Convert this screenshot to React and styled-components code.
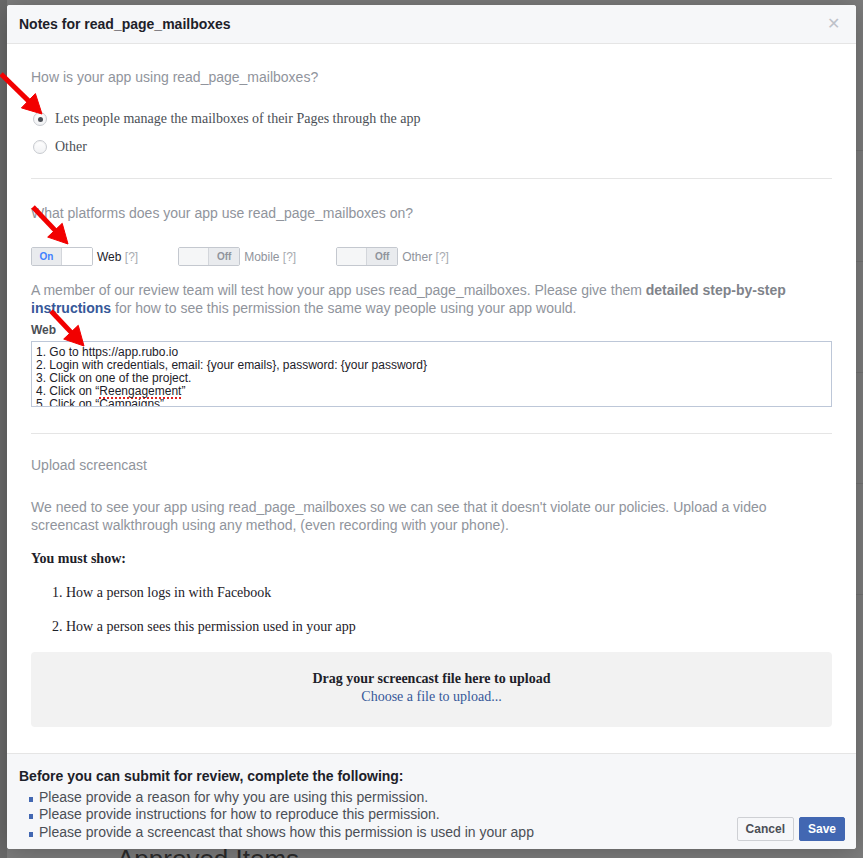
import React from "react";
import styled, { createGlobalStyle } from "styled-components";

const GlobalStyle = createGlobalStyle`
  html, body {
    margin: 0;
    padding: 0;
    background: #7b7b7b;
  }
  body {
    font-family: "Liberation Sans", Arial, sans-serif;
    -webkit-font-smoothing: antialiased;
  }
`;

const Screen = styled.div`
  position: relative;
  width: 863px;
  height: 858px;
  overflow: hidden;
  background: #7d7d7d;
`;

// page that sits behind the dimmed overlay
const BehindPage = styled.div`
  display: grid;
  grid-template-columns: 7px 1fr;
  height: 100%;

  .side {
    background: #6a6a6a;
  }
  .main {
    display: flex;
    flex-direction: column;
    padding-top: 40px;
  }
  .row {
    height: 110px;
    border-bottom: 1px solid #727272;
  }
  .heading {
    margin-top: auto;
    padding: 0 0 0 110px;
    height: 14px;
    overflow: hidden;
    font-size: 26px;
    line-height: 30px;
    color: #2b2b2b;
  }
`;

const Overlay = styled.div`
  position: absolute;
  inset: 0;
  display: flex;
  align-items: flex-start;
  padding: 5px 7px 0 7px;
`;

const Dialog = styled.div`
  width: 849px;
  height: 844px;
  background: #fff;
  border-radius: 3px;
  box-shadow: 0 2px 26px rgba(0, 0, 0, 0.25);
  display: flex;
  flex-direction: column;
  overflow: hidden;
`;

const Header = styled.div`
  display: flex;
  align-items: center;
  justify-content: space-between;
  height: 38px;
  padding: 0 12px;
  background: #f6f7f9;
  border-bottom: 1px solid #e5e5e5;

  h2 {
    margin: 0;
    font-size: 14px;
    font-weight: bold;
    color: #1d2129;
  }
  .close {
    color: #bec2c9;
    font-size: 16px;
    line-height: 16px;
    margin-right: 4px;
  }
`;

const Body = styled.div`
  flex: 1;
  padding: 0 24px;
`;

const Section = styled.div`
  padding: ${(p) => p.$pad};
  border-bottom: ${(p) => (p.$last ? "none" : "1px solid #e5e5e5")};
`;

const Question = styled.div`
  font-size: 14px;
  line-height: 18px;
  color: #90949c;
  margin-top: ${(p) => p.$mt || 0}px;
`;

const RadioList = styled.div`
  margin-top: 19px;
  display: flex;
  flex-direction: column;
`;

const RadioRow = styled.label`
  display: flex;
  align-items: center;
  height: 28px;
  gap: 8px;
  padding-left: 2px;
  font-family: "Liberation Serif", "Times New Roman", serif;
  font-size: 14px;
  color: #4b4f56;
`;

const RadioDot = styled.span`
  position: relative;
  width: 12px;
  height: 12px;
  border-radius: 50%;
  border: 1px solid #c8cbd0;
  background: linear-gradient(#ffffff, #f1f2f4);
  box-shadow: inset 0 1px 1px rgba(0, 0, 0, 0.06);

  &::after {
    content: "";
    display: ${(p) => (p.$checked ? "block" : "none")};
    position: absolute;
    left: 3.5px;
    top: 3.5px;
    width: 5px;
    height: 5px;
    border-radius: 50%;
    background: #4b4f56;
  }
`;

const ToggleRow = styled.div`
  display: flex;
  align-items: center;
  gap: 40px;
  margin-top: 25px;
  height: 19px;
`;

const ToggleGroup = styled.div`
  display: flex;
  align-items: center;
  gap: 4px;
`;

const Toggle = styled.div`
  display: grid;
  grid-template-columns: 30px 30px;
  width: 62px;
  height: 19px;
  box-sizing: border-box;
  border: 1px solid #c4c8cf;
  border-radius: 2px;
  overflow: hidden;

  span {
    display: flex;
    align-items: center;
    justify-content: center;
    font-size: 10px;
    font-weight: bold;
  }
  .left {
    background: ${(p) => (p.$on ? "#e9ebee" : "#f5f6f7")};
    color: #4080ff;
    border-right: 1px solid #d3d6db;
  }
  .right {
    background: ${(p) => (p.$on ? "#fff" : "#e9ebee")};
    color: #90949c;
  }
`;

const ToggleLabel = styled.span`
  font-size: 12px;
  color: ${(p) => (p.$active ? "#1d2129" : "#90949c")};

  em {
    font-style: normal;
    color: #a8abb1;
  }
`;

const Paragraph = styled.p`
  margin: ${(p) => p.$mt || 0}px 0 0;
  font-size: 14px;
  line-height: 18px;
  color: #90949c;

  b {
    color: #7f838a;
  }
  a {
    color: #365899;
    font-weight: bold;
    text-decoration: none;
  }
`;

const FieldLabel = styled.div`
  margin-top: 6px;
  font-size: 12px;
  line-height: 14px;
  font-weight: bold;
  color: #4b4f56;
`;

const TextBox = styled.div`
  margin-top: 4px;
  height: 66px;
  box-sizing: border-box;
  border: 1px solid #bdc7d8;
  padding: 4px 4px 0;
  overflow: hidden;
  font-size: 12px;
  line-height: 13px;
  color: #1d2129;

  .typo {
    text-decoration: underline dotted #e02020;
    text-decoration-thickness: 2px;
    text-underline-offset: 2px;
  }
`;

const SerifBold = styled.div`
  margin-top: 16px;
  font-family: "Liberation Serif", "Times New Roman", serif;
  font-size: 14px;
  line-height: 18px;
  font-weight: bold;
  color: #1d2129;
`;

const ShowList = styled.ol`
  margin: 16px 0 0;
  padding: 0 0 0 35px;
  font-family: "Liberation Serif", "Times New Roman", serif;
  font-size: 14px;
  line-height: 18px;
  color: #1d2129;

  li + li {
    margin-top: 16px;
  }
`;

const DropZone = styled.div`
  margin-top: 16px;
  height: 75px;
  box-sizing: border-box;
  padding-top: 18px;
  background: #f2f2f2;
  border-radius: 4px;
  text-align: center;
  font-family: "Liberation Serif", "Times New Roman", serif;
  font-size: 14px;
  line-height: 18px;

  strong {
    display: block;
    color: #1d2129;
  }
  a {
    color: #365899;
    text-decoration: none;
  }
`;

const Footer = styled.div`
  display: flex;
  align-items: flex-end;
  justify-content: space-between;
  padding: 13px 11px 8px 12px;
  background: #f6f7f9;
  border-top: 1px solid #e5e5e5;

  h3 {
    margin: 0;
    font-size: 14px;
    line-height: 18px;
    font-weight: bold;
    color: #1d2129;
  }
  ul {
    margin: 4px 0 0;
    padding: 0 0 0 10px;
    list-style: none;
  }
  li {
    position: relative;
    padding-left: 10px;
    font-size: 14px;
    line-height: 17.5px;
    color: #4b4f56;
  }
  li::before {
    content: "";
    position: absolute;
    left: 0;
    top: 8px;
    width: 4px;
    height: 5px;
    background: #4267b2;
  }
`;

const Buttons = styled.div`
  display: flex;
  gap: 5px;
  margin-bottom: 0;
`;

const Button = styled.button`
  height: 24px;
  padding: 0 8px;
  border-radius: 2px;
  font-family: "Liberation Sans", Arial, sans-serif;
  font-size: 12px;
  font-weight: bold;
  border: 1px solid ${(p) => (p.$primary ? "#4267b2" : "#ced0d4")};
  background: ${(p) => (p.$primary ? "#4267b2" : "#f6f7f9")};
  color: ${(p) => (p.$primary ? "#fff" : "#4b4f56")};
`;

const Marks = styled.svg`
  position: absolute;
  left: 0;
  top: 0;
  pointer-events: none;
`;

function Arrow({ x1, y1, x2, y2 }) {
  const dx = x2 - x1;
  const dy = y2 - y1;
  const len = Math.hypot(dx, dy);
  const ux = dx / len;
  const uy = dy / len;
  const head = 19;
  const half = 10;
  const bx = x2 - ux * head;
  const by = y2 - uy * head;
  const pts = [
    [x2, y2],
    [bx - uy * half, by + ux * half],
    [bx + uy * half, by - ux * half],
  ]
    .map((p) => p.join(","))
    .join(" ");
  return (
    <g fill="#f20000" stroke="#f20000">
      <line x1={x1} y1={y1} x2={bx + ux * 2} y2={by + uy * 2} strokeWidth="5" />
      <polygon points={pts} strokeWidth="1" />
    </g>
  );
}

const platforms = [
  { name: "Web", on: true },
  { name: "Mobile", on: false },
  { name: "Other", on: false },
];

const todo = [
  "Please provide a reason for why you are using this permission.",
  "Please provide instructions for how to reproduce this permission.",
  "Please provide a screencast that shows how this permission is used in your app",
];

export default function App() {
  return (
    <Screen>
      <GlobalStyle />
      <BehindPage>
        <div className="side" />
        <div className="main">
          <div className="row" />
          <div className="row" />
          <div className="row" />
          <div className="row" />
          <div className="row" />
          <div className="heading">Approved Items</div>
        </div>
      </BehindPage>

      <Overlay>
        <Dialog>
          <Header>
            <h2>Notes for read_page_mailboxes</h2>
            <span className="close">✕</span>
          </Header>

          <Body>
            <Section $pad="24px 0 17px">
              <Question>How is your app using read_page_mailboxes?</Question>
              <RadioList>
                <RadioRow>
                  <RadioDot $checked />
                  Lets people manage the mailboxes of their Pages through the app
                </RadioRow>
                <RadioRow>
                  <RadioDot />
                  Other
                </RadioRow>
              </RadioList>
            </Section>

            <Section $pad="25px 0 26px">
              <Question>What platforms does your app use read_page_mailboxes on?</Question>
              <ToggleRow>
                {platforms.map((p) => (
                  <ToggleGroup key={p.name}>
                    <Toggle $on={p.on}>
                      <span className="left">{p.on ? "On" : ""}</span>
                      <span className="right">{p.on ? "" : "Off"}</span>
                    </Toggle>
                    <ToggleLabel $active={p.on}>
                      {p.name} <em>[?]</em>
                    </ToggleLabel>
                  </ToggleGroup>
                ))}
              </ToggleRow>
              <Paragraph $mt={15}>
                A member of our review team will test how your app uses read_page_mailboxes. Please give them{" "}
                <b>detailed step-by-step</b> <a>instructions</a> for how to see this permission the same way people
                using your app would.
              </Paragraph>
              <FieldLabel>Web</FieldLabel>
              <TextBox>
                1. Go to https://app.rubo.io
                <br />
                2. Login with credentials, email: {"{your emails}"}, password: {"{your password}"}
                <br />
                3. Click on one of the project.
                <br />
                4. Click on “<span className="typo">Reengagement</span>”
                <br />
                5. Click on “Campaigns”
              </TextBox>
            </Section>

            <Section $pad="22px 0 24px" $last>
              <Question>Upload screencast</Question>
              <Paragraph $mt={24}>
                We need to see your app using read_page_mailboxes so we can see that it doesn't violate our policies.
                Upload a video screencast walkthrough using any method, (even recording with your phone).
              </Paragraph>
              <SerifBold>You must show:</SerifBold>
              <ShowList>
                <li>How a person logs in with Facebook</li>
                <li>How a person sees this permission used in your app</li>
              </ShowList>
              <DropZone>
                <strong>Drag your screencast file here to upload</strong>
                <a>Choose a file to upload...</a>
              </DropZone>
            </Section>
          </Body>

          <Footer>
            <div>
              <h3>Before you can submit for review, complete the following:</h3>
              <ul>
                {todo.map((t) => (
                  <li key={t}>{t}</li>
                ))}
              </ul>
            </div>
            <Buttons>
              <Button>Cancel</Button>
              <Button $primary>Save</Button>
            </Buttons>
          </Footer>
        </Dialog>
      </Overlay>

      <Marks width="863" height="858">
        <Arrow x1={1} y1={74} x2={42} y2={114} />
        <Arrow x1={33} y1={207} x2={68} y2={244} />
        <Arrow x1={51} y1={311} x2={84} y2={346} />
      </Marks>
    </Screen>
  );
}
